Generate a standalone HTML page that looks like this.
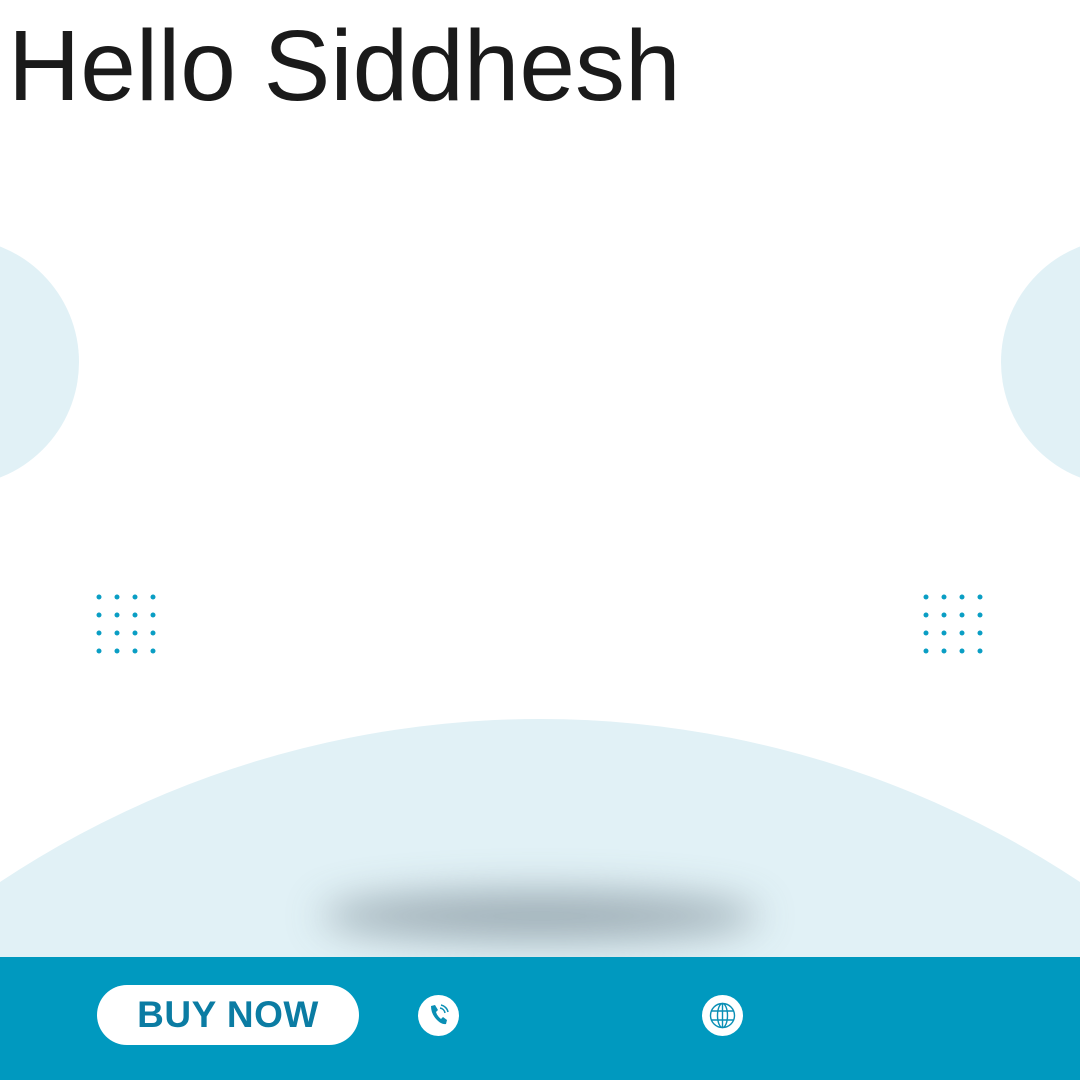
<!DOCTYPE html>
<html><head><style>
html,body{margin:0;padding:0;width:1080px;height:1080px;overflow:hidden}
#w{width:1080px;height:1080px;position:relative;overflow:hidden;background:#fff;font-family:"Liberation Sans",Arial,sans-serif}
.t{position:absolute;left:8px;top:16px;font-size:100px;line-height:100px;color:#1a1a1a;white-space:nowrap}
.c{position:absolute;border-radius:50%;background:#e1f1f6}
.bar{position:absolute;left:0;top:957px;width:1080px;height:123px;background:#0099bf}
.btn{position:absolute;left:97px;top:985px;width:262px;height:60px;border-radius:30px;background:#fff;color:#0b7ca3;font-weight:bold;font-size:37px;line-height:60px;text-align:center;letter-spacing:0.5px}
.ic{position:absolute;width:41px;height:41px;border-radius:50%;background:#fff;top:995px}
.ic svg{position:absolute;left:0;top:0}
</style></head><body><div id="w">
<div class="t">Hello Siddhesh</div>
<div class="c" style="left:-169px;top:238px;width:248px;height:248px"></div>
<div class="c" style="left:1001px;top:238px;width:248px;height:248px"></div>
<div style="position:absolute;left:0;top:719px;width:1080px;height:361px;overflow:hidden"><div class="c" style="left:-436px;top:0;width:1952px;height:1952px"></div></div>
<div style="position:absolute;left:320px;top:892px;width:440px;height:48px;border-radius:50%;background:#8a9aa3;filter:blur(20px);opacity:.8"></div>
<svg style="position:absolute;left:0;top:0" width="1080" height="700">
<g fill="#0a9ec4">
<circle cx="99" cy="597" r="2.5"/><circle cx="117" cy="597" r="2.5"/><circle cx="135" cy="597" r="2.5"/><circle cx="153" cy="597" r="2.5"/>
<circle cx="99" cy="615" r="2.5"/><circle cx="117" cy="615" r="2.5"/><circle cx="135" cy="615" r="2.5"/><circle cx="153" cy="615" r="2.5"/>
<circle cx="99" cy="633" r="2.5"/><circle cx="117" cy="633" r="2.5"/><circle cx="135" cy="633" r="2.5"/><circle cx="153" cy="633" r="2.5"/>
<circle cx="99" cy="651" r="2.5"/><circle cx="117" cy="651" r="2.5"/><circle cx="135" cy="651" r="2.5"/><circle cx="153" cy="651" r="2.5"/>
<circle cx="926" cy="597" r="2.5"/><circle cx="944" cy="597" r="2.5"/><circle cx="962" cy="597" r="2.5"/><circle cx="980" cy="597" r="2.5"/>
<circle cx="926" cy="615" r="2.5"/><circle cx="944" cy="615" r="2.5"/><circle cx="962" cy="615" r="2.5"/><circle cx="980" cy="615" r="2.5"/>
<circle cx="926" cy="633" r="2.5"/><circle cx="944" cy="633" r="2.5"/><circle cx="962" cy="633" r="2.5"/><circle cx="980" cy="633" r="2.5"/>
<circle cx="926" cy="651" r="2.5"/><circle cx="944" cy="651" r="2.5"/><circle cx="962" cy="651" r="2.5"/><circle cx="980" cy="651" r="2.5"/>
</g></svg>
<div class="bar"></div>
<div class="btn">BUY NOW</div>
<div class="ic" style="left:418px"><svg width="41" height="41" viewBox="0 0 41 41">
<path d="M13 11 l4 -1 l3 5 l-2 2 q1 4 5 7 l2 -2 l4 3 l-1 4 q-4 1 -9 -4 q-6 -6 -6 -14z" fill="#0a8fb5"/>
<path d="M22 13 a6 6 0 0 1 5 5 M23 10 a9 9 0 0 1 7 7" stroke="#0a8fb5" stroke-width="1.5" fill="none"/>
</svg></div>
<div class="ic" style="left:702px"><svg width="41" height="41" viewBox="0 0 41 41">
<g stroke="#0a8fb5" stroke-width="1.4" fill="none">
<circle cx="20.5" cy="20.5" r="12"/><ellipse cx="20.5" cy="20.5" rx="5" ry="12"/>
<path d="M9 16h23M9 25h23M20.5 8.5v24"/></g></svg></div>
</div></body></html>
